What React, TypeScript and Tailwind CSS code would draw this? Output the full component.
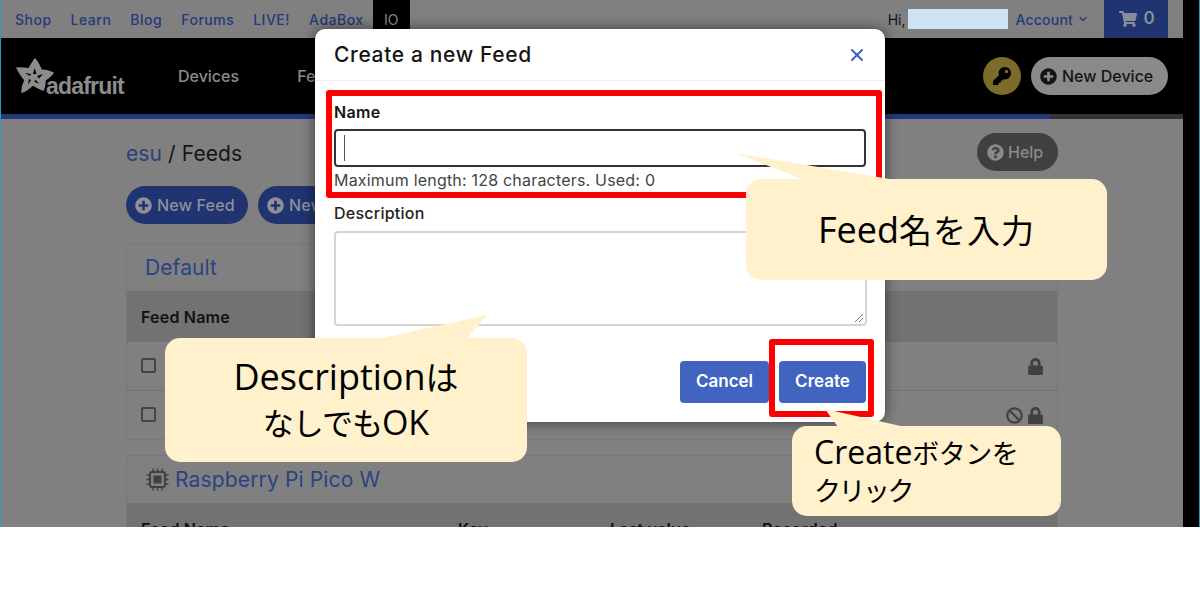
import { ChevronDown, X } from "lucide-react"
import { FaBan, FaKey, FaLock, FaPlusCircle, FaQuestionCircle, FaShoppingCart } from "react-icons/fa"

const navLinks = ["Shop", "Learn", "Blog", "Forums", "LIVE!", "AdaBox"]

function Logo() {
    return (
        <div className="relative w-[112px] h-[60px]">
            <svg className="absolute left-0 top-[12px]" width="38" height="36" viewBox="0 0 38 36">
                <path fill="#8c8c8c" stroke="#8c8c8c" strokeWidth="1.5" strokeLinejoin="round" d="M19 1 C21 4 24 8 25 12 C29 12 33 13 37 15 C35 18 32 20 29 22 C29 25 29 29 27 32 C24 31 20 29 17 27 C14 29 10 33 6 34 C6 30 7 26 9 22 C6 19 3 14 1 10 C5 10 9 10 13 11 C14 8 17 4 19 1 Z" />
                <path fill="#000" d="M17 16 L18.5 10 L20.5 16 Z M21 18 L27 16 L23 20.5 Z M20 22 L23 26 L18 23.5 Z M15 22 L12 27 L13 21 Z M14 18 L9 15 L15 16 Z" />
            </svg>
            <span className="absolute left-[30px] top-[26px] font-['Liberation_Sans'] font-bold text-[23px] leading-[28px] tracking-[-0.8px] text-[#8c8c8c]">adafruit</span>
        </div>
    )
}

function Chip() {
    return (
        <svg width="23" height="23" viewBox="0 0 23 23" className="shrink-0" fill="none" stroke="#404040">
            <rect x="4" y="4" width="15" height="15" rx="2" strokeWidth="2" />
            <rect x="7.5" y="7.5" width="8" height="8" fill="#404040" strokeWidth="0" />
            <path strokeWidth="1.5" d="M7 0.5 V4 M11.5 0.5 V4 M16 0.5 V4 M7 19 V22.5 M11.5 19 V22.5 M16 19 V22.5 M0.5 7 H4 M0.5 11.5 H4 M0.5 16 H4 M19 7 H22.5 M19 11.5 H22.5 M19 16 H22.5" />
        </svg>
    )
}

function Pill({ label, width }: { label: string, width: string }) {
    return (
        <div className={`flex items-center h-[38px] rounded-full bg-[#1f3470] pl-[9px] text-[#8f9098] text-[16px] tracking-[0.2px] font-medium overflow-hidden shrink-0 ${width}`}>
            <FaPlusCircle size={17} className="mr-[5px] shrink-0" />
            <span>{label}</span>
        </div>
    )
}

function Callout({ className, children }: { className: string, children: React.ReactNode }) {
    return (
        <div className={`absolute bg-[#fff1cc] rounded-[15px] text-black font-['Open_Sans','Noto_Sans_CJK_JP',sans-serif] ${className}`}>
            {children}
        </div>
    )
}

export default function App() {
    return (
        <div className="relative w-[1200px] h-[592px] bg-white overflow-hidden font-['Inter',sans-serif]">
            <div className="flex h-[527px] bg-black">
                <div className="w-px bg-[#3194c4]" />
                <div className="w-[1182px] flex flex-col bg-[#808080]">
                    {/* top links */}
                    <div className="flex items-center h-[38px] text-[14px] text-[#26397a] pl-[14px] pr-[15px] shrink-0">
                        <div className="flex gap-[19px] font-medium tracking-[0.5px]">
                            {navLinks.map((link) => <span key={link}>{link}</span>)}
                        </div>
                        <div className="flex items-center justify-center w-[37px] h-[38px] ml-[9px] bg-black text-[#8c8c8c] text-[14px]">IO</div>
                        <div className="flex items-center ml-auto h-full">
                            <span className="text-[#141414]">Hi,</span>
                            <div className="w-[100px] h-[20px] bg-[#cfe2f3] ml-[2px]" />
                            <span className="ml-[8px] font-medium tracking-[0.2px]">Account</span>
                            <ChevronDown size={12} strokeWidth={2.5} className="ml-[4px]" />
                            <div className="flex items-center justify-center gap-[6px] w-[64px] h-full ml-[15px] pl-[2px] bg-[#1f3470] text-[#8a8d99] text-[17px] font-semibold">
                                <FaShoppingCart size={18} />
                                <span>0</span>
                            </div>
                        </div>
                    </div>
                    {/* main header */}
                    <div className="flex items-center h-[76px] bg-black pl-[15px] pr-[15px] shrink-0">
                        <Logo />
                        <span className="ml-[50px] text-[#8c8c8c] text-[16px] font-medium">Devices</span>
                        <span className="ml-[58px] text-[#8c8c8c] text-[16px] font-medium">Feeds</span>
                        <div className="flex items-center justify-center w-[38px] h-[38px] rounded-full bg-[#7d6b2a] ml-auto">
                            <FaKey size={18} className="text-black" />
                        </div>
                        <div className="flex items-center w-[137px] h-[38px] rounded-full bg-[#8a8a8a] ml-[10px] pl-[9px] text-[#141414] text-[16px] font-medium">
                            <FaPlusCircle size={17} className="mr-[5px]" />
                            <span>New Device</span>
                        </div>
                    </div>
                    <div className="flex h-[5px] shrink-0">
                        <div className="w-[1049px] bg-[#223a7c]" />
                        <div className="flex-1 bg-[#333333]" />
                    </div>
                    {/* page content */}
                    <div className="pl-[125px] w-[1057px] pt-[14px] flex flex-col overflow-hidden flex-1">
                        <div className="flex items-center justify-between h-[38px] shrink-0">
                            <div className="pt-[3px] text-[21px] tracking-[0.1px] text-[#141414]"><span className="text-[#2b3f7c]">esu</span> / Feeds</div>
                            <div className="flex items-center h-[38px] w-[81px] pl-[10px] rounded-full bg-[#404040] text-[#8a8a8a] text-[16px] font-medium">
                                <FaQuestionCircle size={17} className="mr-[4px]" />
                                <span>Help</span>
                            </div>
                        </div>
                        <div className="flex gap-[10px] mt-[15px] shrink-0">
                            <Pill label="New Feed" width="w-[122px]" />
                            <Pill label="New Group" width="w-[130px]" />
                        </div>
                        <div className="mt-[19px] border border-[#777777] rounded-[4px] shrink-0">
                            <div className="h-[47px] flex items-center pl-[18px] pt-[1px] text-[21px] tracking-[0.1px] text-[#2b4385]">Default</div>
                            <div className="h-[51px] flex items-center pl-[14px] bg-[#727272] text-[16px] tracking-[0.2px] font-semibold text-[#111111]">Feed Name</div>
                            <div className="h-[49px] flex items-center justify-between pl-[14px] pr-[13px] border-b border-[#747474]">
                                <div className="w-[15px] h-[15px] mb-[2px] rounded-[2px] border-2 border-[#454545]" />
                                <FaLock size={17} className="text-[#404040]" />
                            </div>
                            <div className="h-[48px] flex items-center justify-between pl-[14px] pr-[13px]">
                                <div className="w-[15px] h-[15px] mb-[2px] rounded-[2px] border-2 border-[#454545]" />
                                <div className="flex items-center gap-[4px] text-[#404040]">
                                    <FaBan size={17} />
                                    <FaLock size={17} />
                                </div>
                            </div>
                        </div>
                        <div className="mt-[15px] border border-[#777777] rounded-[4px] shrink-0">
                            <div className="h-[47px] flex items-center pl-[19px] gap-[6px] text-[21px] tracking-[0.15px] text-[#2b4385]">
                                <Chip />
                                <span>Raspberry Pi Pico W</span>
                            </div>
                            <div className="h-[51px] flex items-center pl-[14px] bg-[#727272] text-[16px] tracking-[0.2px] font-semibold text-[#111111]">
                                <span className="w-[317px]">Feed Name</span>
                                <span className="w-[152px]">Key</span>
                                <span className="w-[152px]">Last value</span>
                                <span>Recorded</span>
                            </div>
                        </div>
                    </div>
                </div>
                <div className="w-[16px]" />
                <div className="w-px bg-[#3194c4]" />
            </div>

            {/* modal */}
            <div className="absolute left-[315px] top-[29px] w-[570px] h-[393px] bg-white rounded-[10px] shadow-[0_0_14px_rgba(0,0,0,0.55)] flex flex-col">
                <div className="flex items-center justify-between h-[52px] px-[19px] pt-[1px] border-b border-[#eeeeee] shrink-0">
                    <span className="text-[21px] font-medium tracking-[0.65px] text-[#141414]">Create a new Feed</span>
                    <X size={20} strokeWidth={2.5} className="text-[#3f63c4] mr-[-1px]" />
                </div>
                <div className="flex flex-col px-[19px] pt-[21px]">
                    <label className="text-[16px] leading-[20px] font-semibold tracking-[0.3px] text-[#141414]">Name</label>
                    <div className="flex items-center h-[38px] mt-[7px] rounded-[4px] border-2 border-[#333333] pl-[8px]">
                        <div className="w-px h-[26px] bg-[#555555]" />
                    </div>
                    <div className="mt-[3px] text-[16px] leading-[20px] tracking-[0.2px] text-[#444444]">Maximum length: 128 characters. Used: 0</div>
                    <label className="mt-[13px] text-[16px] leading-[20px] font-medium tracking-[0.25px] text-[#222222]">Description</label>
                    <div className="relative h-[95px] w-[533px] mt-[8px] rounded-[4px] border-2 border-[#d4d4d4] bg-white">
                        <svg className="absolute right-[1px] bottom-[1px]" width="10" height="10" viewBox="0 0 10 10">
                            <path d="M1 9 L9 1 M5 9 L9 5" stroke="#777777" strokeWidth="1" />
                        </svg>
                    </div>
                    <div className="flex justify-end gap-[10px] mt-[35px]">
                        <button className="w-[89px] h-[42px] rounded-[4px] bg-[#4064c0] text-white text-[17px] font-semibold">Cancel</button>
                        <button className="w-[87px] h-[42px] rounded-[4px] bg-[#4064c0] text-white text-[17px] font-semibold">Create</button>
                    </div>
                </div>
            </div>

            {/* annotations */}
            <div className="absolute left-[326px] top-[90px] w-[556px] h-[108px] border-[6px] border-[#ff0000] rounded-[3px]" />
            <div className="absolute left-[769px] top-[339px] w-[105px] h-[78px] border-[6px] border-[#ff0000] rounded-[3px]" />

            <svg className="absolute left-0 top-0" width="1200" height="592" viewBox="0 0 1200 592">
                <path fill="#fff1cc" d="M735 153 L895 180 L805 180 Z M487 315 L378 339 L467 339 Z M825 409 L905 427 L838 427 Z" />
            </svg>

            <Callout className="left-[746px] top-[179px] w-[361px] h-[101px] flex items-center justify-center text-[36px]">
                <span>Feed<span className="text-[33px] tracking-[1px]">名を入力</span></span>
            </Callout>
            <Callout className="left-[165px] top-[338px] w-[362px] h-[124px] flex flex-col items-center justify-center text-[36px] leading-[44px]">
                <span>Description<span className="text-[33px]">は</span></span>
                <span><span className="text-[31px] tracking-[-1px]">なしでも</span><span className="text-[34px]">OK</span></span>
            </Callout>
            <Callout className="left-[792px] top-[426px] w-[269px] h-[90px] flex flex-col justify-center pl-[22px] text-[32px] leading-[37px]">
                <span>Create<span className="text-[27px] tracking-[-0.5px]">ボタンを</span></span>
                <span className="text-[27px] tracking-[-2.5px]">クリック</span>
            </Callout>
        </div>
    )
}
